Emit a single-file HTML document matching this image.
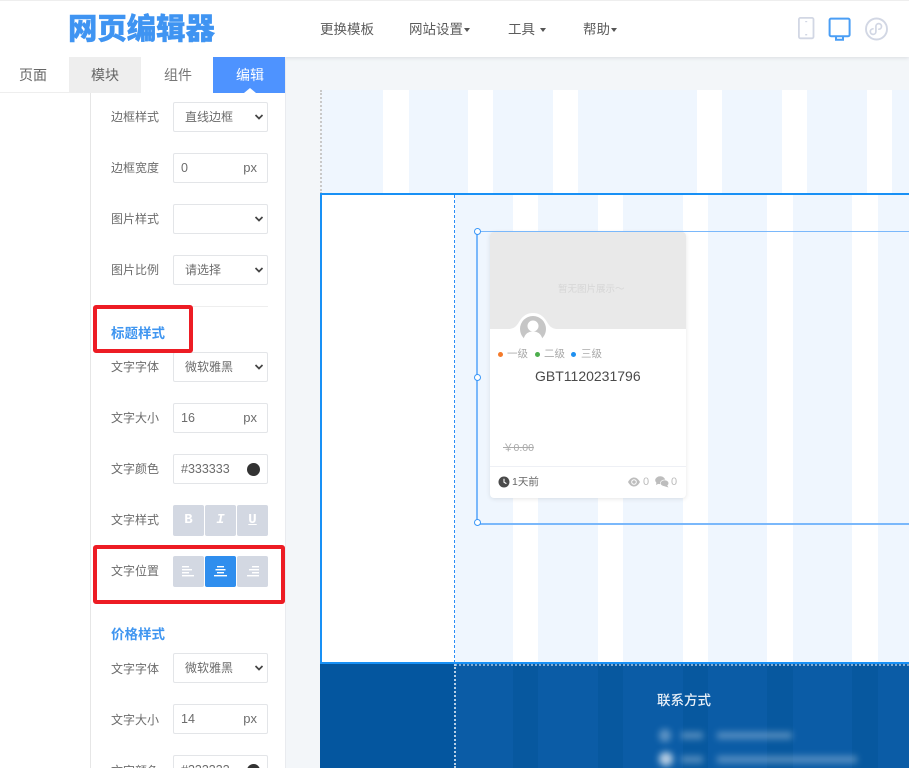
<!DOCTYPE html>
<html lang="zh"><head><meta charset="utf-8"><style>
*{box-sizing:border-box}
html,body{margin:0;padding:0;width:909px;height:768px;overflow:hidden}
#r{width:909px;height:768px;position:relative;overflow:hidden;background:#f3f6f9;font-family:"Liberation Sans","Noto Sans CJK SC",sans-serif;color:#666;font-size:12px}
.a{position:absolute}
.t{position:absolute;white-space:nowrap}
.lb{position:absolute;left:111px;font-size:12px;line-height:16px;color:#6c6c6c;white-space:nowrap}
.sel,.inp{position:absolute;left:173px;width:95px;height:30px;background:#fff;border:1px solid #e3e5e8;border-radius:2px;font-size:12px;line-height:28px;color:#6c6c6c;padding-left:11px}
.sel svg{position:absolute;right:3px;top:11px}
.inp{padding-left:7px;font-size:12.5px}
.inp span{position:absolute;right:10px;top:0;font-size:13px}
.btn{position:absolute;width:31px;height:31px;background:#d3d8e2;border-radius:2px;color:#fff;text-align:center;font:bold 14px/31px "Liberation Mono",monospace}
.st{position:absolute;left:111px;font-size:13.5px;font-weight:bold;color:#4096f0;line-height:20px}
.red{position:absolute;border:4px solid #ed1c24;border-radius:3px}
.nav{position:absolute;top:20px;font-size:13.5px;line-height:20px;color:#5c5c5c;white-space:nowrap}
.car{display:inline-block;border:3.5px solid transparent;border-top:4px solid #555;border-bottom:0;vertical-align:2px;margin-left:1px}
.w{position:absolute;background:#fff}
.d{position:absolute}
.h{position:absolute;width:7px;height:7px;border:1.2px solid #3a97f8;border-radius:50%;background:#fff}
.dot{position:absolute;width:5px;height:5px;border-radius:50%;top:352px}
.lv{position:absolute;top:347px;font-size:10.5px;line-height:14px;color:#aaa}
.bl{position:absolute;background:#b4cde4;filter:blur(3.5px)}
</style></head><body><div id="r">

<!-- canvas top stripes -->
<div class="a" style="left:321px;top:90px;width:588px;height:104px;background:#eff6fe"></div>
<div class="w" style="left:383px;top:90px;width:26px;height:104px"></div>
<div class="w" style="left:468px;top:90px;width:25px;height:104px"></div>
<div class="w" style="left:553px;top:90px;width:25px;height:104px"></div>
<div class="w" style="left:697px;top:90px;width:25px;height:104px"></div>
<div class="w" style="left:782px;top:90px;width:25px;height:104px"></div>
<div class="w" style="left:867px;top:90px;width:25px;height:104px"></div>
<div class="a" style="left:320px;top:90px;height:104px;border-left:2px dotted #c9c9c9"></div>

<!-- selected region -->
<div class="a" style="left:320px;top:193px;width:589px;height:471px;background:#fff"></div>
<div class="a" style="left:455px;top:195px;width:454px;height:468px;background:#eff6fe"></div>
<div class="w" style="left:513px;top:195px;width:25px;height:468px"></div>
<div class="w" style="left:598px;top:195px;width:25px;height:468px"></div>
<div class="w" style="left:683px;top:195px;width:25px;height:468px"></div>
<div class="w" style="left:767px;top:195px;width:26px;height:468px"></div>
<div class="w" style="left:852px;top:195px;width:26px;height:468px"></div>
<div class="a" style="left:320px;top:193px;width:600px;height:471px;border:2px solid #1890f5"></div>
<div class="a" style="left:454px;top:195px;height:468px;border-left:1px dashed #2a8cf5"></div>

<!-- footer -->
<div class="a" style="left:320px;top:664px;width:589px;height:104px;background:#04569f"></div>
<div class="a" style="left:455px;top:664px;width:454px;height:104px;background:#0b5ca6"></div>
<div class="d" style="left:513px;top:664px;width:25px;height:104px;background:#07589f"></div>
<div class="d" style="left:598px;top:664px;width:25px;height:104px;background:#07589f"></div>
<div class="d" style="left:683px;top:664px;width:25px;height:104px;background:#07589f"></div>
<div class="d" style="left:767px;top:664px;width:26px;height:104px;background:#07589f"></div>
<div class="d" style="left:852px;top:664px;width:26px;height:104px;background:#07589f"></div>
<div class="a" style="left:455px;top:664px;width:454px;border-top:2px dotted #7eaad2"></div>
<div class="a" style="left:454px;top:664px;height:104px;border-left:2px dotted #b8d0e6"></div>
<div class="t" style="left:657px;top:692px;font-size:13.5px;line-height:18px;color:#e8f0f8;font-weight:500">联系方式</div>
<div class="bl" style="left:659px;top:729px;width:12px;height:13px;border-radius:50%;opacity:.5"></div>
<div class="bl" style="left:681px;top:732px;width:22px;height:7px;opacity:.45"></div>
<div class="bl" style="left:717px;top:732px;width:75px;height:7px;opacity:.45"></div>
<div class="bl" style="left:659px;top:752px;width:14px;height:14px;border-radius:50%;background:#d6e2ee;opacity:.85"></div>
<div class="bl" style="left:681px;top:756px;width:22px;height:7px;opacity:.45"></div>
<div class="bl" style="left:717px;top:756px;width:140px;height:7px;opacity:.45"></div>

<!-- card -->
<div class="a" style="left:490px;top:232px;width:196px;height:266px;background:#fff;border-radius:4px;box-shadow:0 1px 5px rgba(0,0,0,.1)"></div>
<div class="a" style="left:490px;top:232px;width:196px;height:97px;background:#e9e9e9;border-radius:4px 4px 0 0"></div>
<div class="t" style="left:558px;top:283px;font-size:9.5px;line-height:13px;color:#d6d6d6">暂无图片展示～</div>
<svg class="a" style="left:503px;top:312px" width="60" height="18" viewBox="0 0 60 18"><path d="M0 17.5C11 17.5 13 15 16 10C20 3 25 1 30 1S40 3 44 10C47 15 49 17.5 60 17.5Z" fill="#fff"/></svg>
<svg class="a" style="left:520px;top:316px" width="26" height="26" viewBox="0 0 26 26"><circle cx="13" cy="13" r="13" fill="#c6c6c6"/><circle cx="13" cy="10" r="5.5" fill="#fff"/><path d="M3 26C4 18 8 15.5 13 15.5S22 18 23 26Z" fill="#fff"/></svg>
<div class="dot" style="left:498px;background:#f47a2a"></div><div class="lv" style="left:507px">一级</div>
<div class="dot" style="left:535px;background:#4cae4c"></div><div class="lv" style="left:544px">二级</div>
<div class="dot" style="left:571px;background:#1e90f0"></div><div class="lv" style="left:581px">三级</div>
<div class="t" style="left:535px;top:367px;font-size:14px;line-height:18px;color:#4a4a4a">GBT1120231796</div>
<div class="t" style="left:503px;top:442px;font-size:10.5px;line-height:13px;color:#aaa;text-decoration:line-through">￥0.00</div>
<div class="a" style="left:490px;top:466px;width:196px;border-top:1px solid #eef0f5"></div>
<svg class="a" style="left:498px;top:476px" width="12" height="12" viewBox="0 0 12 12"><circle cx="6" cy="6" r="5.5" fill="#4a4a4a"/><path d="M6 2.8V6.2L8.4 7.6" stroke="#fff" stroke-width="1.1" fill="none"/></svg>
<div class="t" style="left:512px;top:475px;font-size:10.5px;line-height:14px;color:#666">1天前</div>
<svg class="a" style="left:628px;top:477px" width="12" height="10" viewBox="0 0 12 10"><path d="M0 5C2 1.5 4 .5 6 .5S10 1.5 12 5C10 8.5 8 9.5 6 9.5S2 8.5 0 5Z" fill="#bdbdbd"/><circle cx="6" cy="5" r="2.8" fill="#fff"/><circle cx="6" cy="5" r="1.8" fill="#bdbdbd"/></svg>
<div class="t" style="left:643px;top:475px;font-size:11px;line-height:14px;color:#bbb">0</div>
<svg class="a" style="left:655px;top:476px" width="14" height="12" viewBox="0 0 14 12"><ellipse cx="5.2" cy="4.2" rx="5" ry="3.9" fill="#bdbdbd"/><path d="M1.5 6L1 9L4 7.5Z" fill="#bdbdbd"/><ellipse cx="9.6" cy="7.2" rx="4.2" ry="3.3" fill="#bdbdbd" stroke="#fff" stroke-width=".6"/><path d="M12 9L13.5 11.5L9.5 10.2Z" fill="#bdbdbd"/></svg>
<div class="t" style="left:671px;top:475px;font-size:11px;line-height:14px;color:#bbb">0</div>

<!-- module selection -->
<div class="a" style="left:476px;top:231px;width:440px;height:294px;border:solid #7ab8fb;border-width:1px 2px 2px 2px"></div>
<div class="h" style="left:474px;top:228px"></div>
<div class="h" style="left:474px;top:374px"></div>
<div class="h" style="left:474px;top:519px"></div>

<!-- header -->
<div class="a" style="left:0;top:0;width:909px;height:57px;background:#fff;border-top:1px solid #eee;box-shadow:0 1px 4px rgba(0,0,0,.1)"></div>
<div class="t" style="left:68px;top:11px;font-size:29.4px;line-height:38px;font-weight:900;color:#3f94f2;-webkit-text-stroke:.4px #3f94f2">网页编辑器</div>
<div class="nav" style="left:320px">更换模板</div>
<div class="nav" style="left:409px">网站设置<i class="car"></i></div>
<div class="nav" style="left:508px">工具 <i class="car"></i></div>
<div class="nav" style="left:583px">帮助<i class="car"></i></div>
<svg class="a" style="left:790px;top:10px" width="100" height="40" viewBox="0 0 100 40">
<rect x="8.9" y="7.9" width="14.6" height="20.4" rx="1.5" fill="none" stroke="#d2d7e4" stroke-width="1.8"/>
<rect x="15.2" y="11" width="2" height="1.2" fill="#d2d7e4"/><rect x="15.2" y="24" width="2" height="1.4" fill="#d2d7e4"/>
<rect x="39.6" y="8.6" width="20" height="17.6" rx="1.5" fill="none" stroke="#4a9ef5" stroke-width="2"/>
<path d="M46 26.5V29.8H53V26.5" fill="none" stroke="#4a9ef5" stroke-width="2"/>
<circle cx="86.5" cy="19" r="10.5" fill="none" stroke="#d2d7e4" stroke-width="1.9"/>
<path d="M83 18.8a2.8 2.8 0 1 0 2.9 2.8V16.4a2.8 2.8 0 1 1 3 2.8" fill="none" stroke="#d2d7e4" stroke-width="1.7" stroke-linecap="round"/>
</svg>

<!-- sidebar -->
<div class="a" style="left:0;top:57px;width:286px;height:711px;background:#fff;border-right:1px solid #e9ebef"></div>
<div class="a" style="left:0;top:92px;width:90px;border-top:1px solid #eee"></div>
<div class="a" style="left:90px;top:93px;height:675px;border-left:1px solid #e6e6e6"></div>
<div class="a" style="left:69px;top:57px;width:72px;height:36px;background:#eee"></div>
<div class="a" style="left:213px;top:57px;width:72px;height:36px;background:#4e93ff"></div>
<svg class="a" style="left:244px;top:88px" width="12" height="5"><path d="M0 5L6 0L12 5Z" fill="#fff"/></svg>
<div class="t" style="left:19px;top:66px;font-size:14px;line-height:19px;color:#666">页面</div>
<div class="t" style="left:91px;top:66px;font-size:14px;line-height:19px;color:#666">模块</div>
<div class="t" style="left:164px;top:66px;font-size:14px;line-height:19px;color:#777">组件</div>
<div class="t" style="left:236px;top:66px;font-size:14px;line-height:19px;color:#fff">编辑</div>

<div class="lb" style="top:109px">边框样式</div>
<div class="sel" style="top:102px">直线边框<svg width="10" height="7" viewBox="0 0 10 7"><path d="M1.5 1L5 4.5L8.5 1" fill="none" stroke="#444" stroke-width="1.7"/></svg></div>
<div class="lb" style="top:160px">边框宽度</div>
<div class="inp" style="top:153px">0<span>px</span></div>
<div class="lb" style="top:211px">图片样式</div>
<div class="sel" style="top:204px"><svg width="10" height="7" viewBox="0 0 10 7"><path d="M1.5 1L5 4.5L8.5 1" fill="none" stroke="#444" stroke-width="1.7"/></svg></div>
<div class="lb" style="top:262px">图片比例</div>
<div class="sel" style="top:255px">请选择<svg width="10" height="7" viewBox="0 0 10 7"><path d="M1.5 1L5 4.5L8.5 1" fill="none" stroke="#444" stroke-width="1.7"/></svg></div>
<div class="a" style="left:111px;top:306px;width:157px;border-top:1px solid #eee"></div>
<div class="st" style="top:324px">标题样式</div>
<div class="lb" style="top:359px">文字字体</div>
<div class="sel" style="top:352px">微软雅黑<svg width="10" height="7" viewBox="0 0 10 7"><path d="M1.5 1L5 4.5L8.5 1" fill="none" stroke="#444" stroke-width="1.7"/></svg></div>
<div class="lb" style="top:410px">文字大小</div>
<div class="inp" style="top:403px">16<span>px</span></div>
<div class="lb" style="top:461px">文字颜色</div>
<div class="inp" style="top:454px">#333333<i class="a" style="left:73px;top:8px;width:13px;height:13px;border-radius:50%;background:#333"></i></div>
<div class="lb" style="top:512px">文字样式</div>
<div class="btn" style="left:173px;top:505px">B</div>
<div class="btn" style="left:205px;top:505px;font-style:italic">I</div>
<div class="btn" style="left:237px;top:505px;text-decoration:underline">U</div>
<div class="lb" style="top:563px">文字位置</div>
<div class="btn" style="left:173px;top:556px"><svg class="a" style="left:9px;top:9px" width="13" height="13" viewBox="0 0 13 13" fill="#fff"><rect y="1" width="7" height="1.4"/><rect y="4" width="10" height="1.4"/><rect y="7" width="7" height="1.4"/><rect y="10" width="12" height="1.4"/></svg></div>
<div class="btn" style="left:205px;top:556px;background:#2f8eee"><svg class="a" style="left:9px;top:9px" width="13" height="13" viewBox="0 0 13 13" fill="#fff"><rect x="3" y="1" width="7" height="1.4"/><rect x="1.5" y="4" width="10" height="1.4"/><rect x="3" y="7" width="7" height="1.4"/><rect x="0" y="10" width="13" height="1.4"/></svg></div>
<div class="btn" style="left:237px;top:556px"><svg class="a" style="left:9px;top:9px" width="13" height="13" viewBox="0 0 13 13" fill="#fff"><rect x="6" y="1" width="7" height="1.4"/><rect x="3" y="4" width="10" height="1.4"/><rect x="6" y="7" width="7" height="1.4"/><rect x="1" y="10" width="12" height="1.4"/></svg></div>
<div class="st" style="top:625px">价格样式</div>
<div class="lb" style="top:661px">文字字体</div>
<div class="sel" style="top:653px">微软雅黑<svg width="10" height="7" viewBox="0 0 10 7"><path d="M1.5 1L5 4.5L8.5 1" fill="none" stroke="#444" stroke-width="1.7"/></svg></div>
<div class="lb" style="top:712px">文字大小</div>
<div class="inp" style="top:704px">14<span>px</span></div>
<div class="lb" style="top:763px">文字颜色</div>
<div class="inp" style="top:755px">#333333<i class="a" style="left:73px;top:8px;width:13px;height:13px;border-radius:50%;background:#333"></i></div>

<div class="red" style="left:93px;top:305px;width:100px;height:48px"></div>
<div class="red" style="left:93px;top:545px;width:192px;height:59px"></div>
</div></body></html>
